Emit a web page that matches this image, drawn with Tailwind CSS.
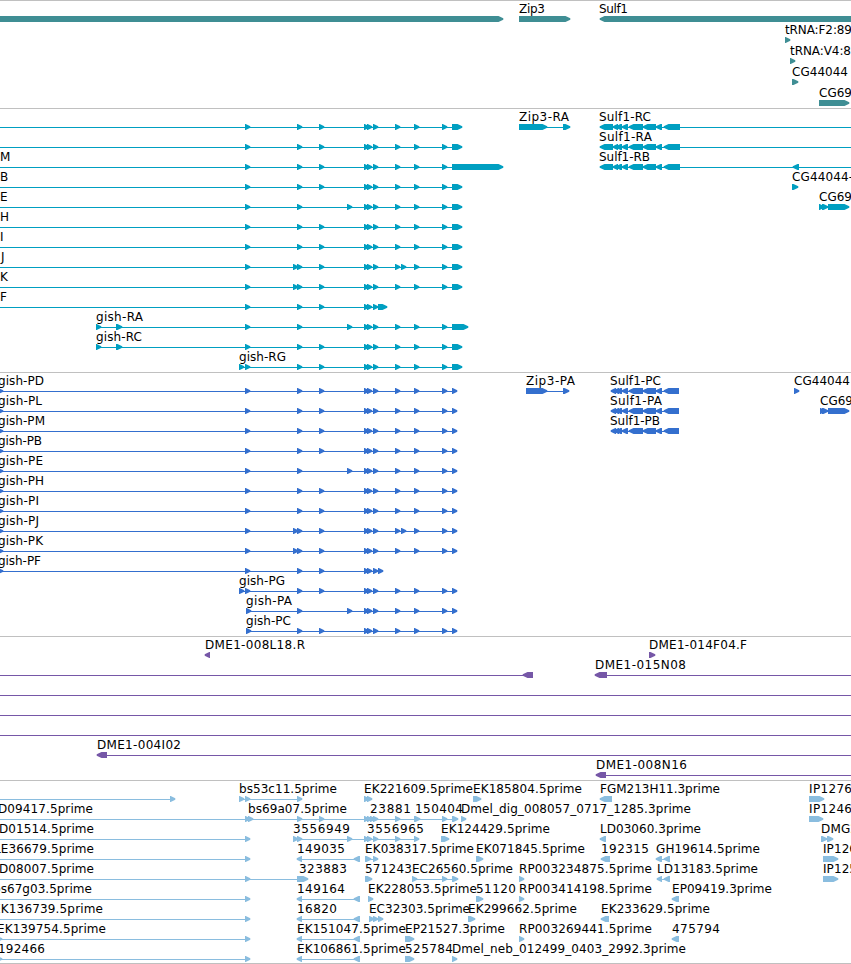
<!DOCTYPE html>
<html lang="en">

<head>
  <meta charset="UTF-8">
  <meta name="viewport" content="width=device-width, initial-scale=1.0">
  <title>Genome Browser</title>
  <script src="https://cdn.jsdelivr.net/npm/@tailwindcss/browser@4"></script>
</head>

<body class="bg-white overflow-hidden">
  <main class="flex flex-col w-[851px] font-['DejaVu_Sans',sans-serif] text-[12px] text-black">
    <!-- Genes -->
    <section class="h-[108px] border-t border-[#c0c0c0]">
      <svg id="genes" class="block w-full h-full text-[#3f8e94]"></svg>
    </section>
    <!-- Transcripts -->
    <section class="h-[264px] border-t border-[#c0c0c0]">
      <svg id="transcripts" class="block w-full h-full text-[#009fc1]"></svg>
    </section>
    <!-- Coding sequences -->
    <section class="h-[264px] border-t border-[#c0c0c0]">
      <svg id="cds" class="block w-full h-full text-[#346fce]"></svg>
    </section>
    <!-- BACs -->
    <section class="h-[144px] border-t border-[#c0c0c0]">
      <svg id="bacs" class="block w-full h-full text-[#7657a7]"></svg>
    </section>
    <!-- ESTs -->
    <section class="h-[184px] border-y border-[#c0c0c0]">
      <svg id="ests" class="block w-full h-full text-[#8abddf]"></svg>
    </section>
  </main>

  <script>
    // row: [labels, lines, glyphs]
    //   labels: [text, start, end]
    //   lines:  "start-end"
    //   glyphs: "start" (5px arrow) or "start-end", "<" in front points it left
    const mid = ' 364 367 373 395 414 442 ';
    const rna = '245 297 319' + mid + '452-462';
    const sulf = ' <613-618 <616-622 <622-628 <629-643 <643-656 <656-662 ';
    const sulfR = ' <600-613' + sulf + '<664-680';
    const sulfP = ' <611-616 <614-619' + sulf.replace('<613-618', '') + '<664-679';
    const prot = '245 297 319' + mid + '452';

    const tracks = {
      genes: { top: 15, step: 21, rows: [
        [[['Zip3', 519, 545], ['Sulf1', 599, 628]], '', '0-503 519-570 <600-870'],
        [[['tRNA:F2:89', 785, 852]], '', '785-790'],
        [[['tRNA:V4:8', 790, 851]], '', '790-795'],
        [[['CG44044', 792, 848]], '', '792-798'],
        [[['CG69', 819, 852]], '', '819-849']
      ] },
      transcripts: { top: 15, step: 20, rows: [
        [[['Zip3-RA', 519, 569], ['Sulf1-RC', 599, 651]], '0-452 547-563 613-851', rna + ' 519-547 563-570' + sulfR],
        [[['Sulf1-RA', 599, 652]], '0-452 613-851', rna + sulfR],
        [[['M', 0], ['Sulf1-RB', 599, 650]], '0-452 613-851', '245 297 319' + mid + '452-503' + sulfR + ' <793-799'],
        [[['B', 0], ['CG44044-', 792, 853]], '0-452', rna + ' 792-798'],
        [[['E', 0], ['CG69', 819, 852]], '0-452 819-830', '245 297 347' + mid + '452-462 819-824 822-828 828-849'],
        [[['H', 0]], '0-452', rna],
        [[['I', 0]], '0-452', rna],
        [[['J', 1]], '0-452', rna + ' 293 401'],
        [[['K', 0]], '0-452', rna + ' 293'],
        [[['F', 0]], '0-378', '245 297 319 364 367 373 378-387'],
        [[['gish-RA', 96, 143]], '96-452', '96 116-122 245 297 347' + mid + '452-468'],
        [[['gish-RC', 96, 142]], '96-452', '96 116-122 ' + rna],
        [[['gish-RG', 239, 286]], '239-452', '239 ' + rna]
      ] },
      cds: { top: 15, step: 20, rows: [
        [[['gish-PD', -2, 44], ['Zip3-PA', 526, 575], ['Sulf1-PC', 610, 661], ['CG44044', 794, 850]], '0-452 547-563 613-664', '-2 ' + prot + ' 526-547 563-569' + sulfP + ' 794-799'],
        [[['gish-PL', -2, 42], ['Sulf1-PA', 610, 662], ['CG69', 820, 853]], '0-452 613-664 820-830', '-2 ' + prot + sulfP + ' 820-825 822-828 828-849'],
        [[['gish-PM', -2, 45], ['Sulf1-PB', 610, 660]], '0-452 613-664', '-2 ' + prot + sulfP],
        [[['gish-PB', -2, 42]], '0-452', '-2 ' + prot],
        [[['gish-PE', -2, 43]], '0-452', '-2 245 297 347' + mid + '452'],
        [[['gish-PH', -2, 44]], '0-452', '-2 ' + prot],
        [[['gish-PI', -2, 39]], '0-452', '-2 ' + prot],
        [[['gish-PJ', -2, 39]], '0-452', '-2 293 401 ' + prot],
        [[['gish-PK', -2, 43]], '0-452', '-2 293 ' + prot],
        [[['gish-PF', -2, 41]], '0-378', '-2 245 297 319 364 367 373 378'],
        [[['gish-PG', 239, 285]], '239-452', '239 ' + prot],
        [[['gish-PA', 246, 292]], '246-452', '246 297 347' + mid + '452'],
        [[['gish-PC', 246, 291]], '246-452', '246 297 319' + mid + '452']
      ] },
      bacs: { top: 15, step: 20, rows: [
        [[['DME1-008L18.R', 205, 305], ['DME1-014F04.F', 649, 747]], '', '<205-210 649-655'],
        [[['DME1-015N08', 595, 686]], '0-524 607-851', '<523-533 <595-607'],
        [[], '0-851', ''],
        [[], '0-851', ''],
        [[], '0-851', ''],
        [[['DME1-004I02', 97, 181]], '107-851', '<97-107'],
        [[['DME1-008N16', 596, 687]], '606-851', '<596-606']
      ] },
      ests: { top: 15, step: 20, rows: [
        [[['bs53c11.5prime', 239, 337], ['EK221609.5prime', 364, 473], ['EK185804.5prime', 473, 582], ['FGM213H11.3prime', 600, 720], ['IP1276', 809, 852]],
          '0-170 239-297', '170 239 245 297 364 367 473-481 <600-612 809-824'],
        [[['D09417.5prime', -2, 93], ['bs69a07.5prime', 248, 347], ['23881', 370, 411], ['150404', 415, 463], ['Dmel_dig_008057_0717_1285.3prime', 461, 691], ['IP1246', 809, 852]],
          '0-452', '245 248 297 319 364 367 370 373 395 414-420 442 452-458 461 809-823'],
        [[['D01514.5prime', -1, 94], ['3556949', 293, 350], ['3556965', 367, 424], ['EK124429.5prime', 441, 550], ['LD03060.3prime', 600, 701], ['DMG2', 821, 858]],
          '0-245 293-414', '245 293 297 347 364 367 373 395 414 441-449 <600-606 821-827 827-833'],
        [[['LE36679.5prime', -6, 94], ['149035', 297, 345], ['EK038317.5prime', 365, 474], ['EK071845.5prime', 476, 585], ['192315', 601, 649], ['GH19614.5prime', 656, 760], ['IP126', 823, 857]],
          '0-245 300-357 365-373 660-666', '245 <297-302 <354-360 365-371 373 476-483 <601-610 <656-662 <664-670 823-838'],
        [[['D08007.5prime', -1, 94], ['323883', 299, 347], ['571243', 365, 412], ['EC26560.5prime', 412, 513], ['RP003234875.5prime', 519, 652], ['LD13183.5prime', 657, 758], ['IP125', 823, 857]],
          '0-297 412-452 660-666', '245 297-308 365-372 412 442 452-458 519 <657-662 <664-670 823-838'],
        [[['bs67g03.5prime', -7, 92], ['149164', 297, 345], ['EK228053.5prime', 368, 477], ['51120', 476, 516], ['RP003414198.5prime', 519, 652], ['EP09419.3prime', 672, 772]],
          '0-245 300-357', '245 <297-302 <354-360 368 476-483 519 <672-679'],
        [[['EK136739.5prime', -7, 103], ['16820', 297, 337], ['EC32303.5prime', 369, 470], ['EK299662.5prime', 468, 577], ['EK233629.5prime', 601, 710]],
          '0-245 300-357', '245 <297-302 <354-360 369 373 378 468-475 <601-609'],
        [[['EK139754.5prime', -3, 106], ['EK151047.5prime', 297, 406], ['EP21527.3prime', 405, 505], ['RP003269441.5prime', 519, 652], ['475794', 672, 720]],
          '0-245 300-357', '-3 245 <297-302 <354-360 405-414 519 <672-679'],
        [[['192466', -2, 45], ['EK106861.5prime', 297, 406], ['525784', 405, 453], ['Dmel_neb_012499_0403_2992.3prime', 452, 686]],
          '0-245 300-357', '-3 245 <297-302 <354-360 405-414 452']
      ] }
    };

    function glyph(token, y) {
      const m = token.match(/^(<?)(-?\d+)(?:-(\d+))?$/);
      const a = +m[2];
      const b = m[3] ? +m[3] : a + 5;
      const tip = Math.min(4.5, b - a - 0.7);
      const pts = m[1]
        ? [[b, y], [a + tip, y], [a - 0.3, y + 2.3], [a - 0.3, y + 3.7], [a + tip, y + 6], [b, y + 6]]
        : [[a, y], [b - tip, y], [b + 0.3, y + 2.3], [b + 0.3, y + 3.7], [b - tip, y + 6], [a, y + 6]];
      return `<polygon points="${pts.join(' ')}" fill="currentColor"/>`;
    }

    for (const id in tracks) {
      const track = tracks[id];
      let out = '';
      track.rows.forEach(([labels, lines, glyphs], i) => {
        const y = track.top + i * track.step;
        lines.split(' ').filter(Boolean).forEach(l => {
          const [a, b] = l.split('-').map(Number);
          out += `<rect x="${a}" y="${y + 3}" width="${b - a}" height="1" fill="currentColor"/>`;
        });
        glyphs.split(' ').filter(Boolean).forEach(g => out += glyph(g, y));
        labels.forEach(([text, a, b]) => {
          const fit = b === undefined ? '' : ` textLength="${b - a}"`;
          out += `<text x="${a}" y="${y - 3}" fill="black"${fit}>${text}</text>`;
        });
      });
      document.getElementById(id).innerHTML = out;
    }
  </script>
</body>

</html>
